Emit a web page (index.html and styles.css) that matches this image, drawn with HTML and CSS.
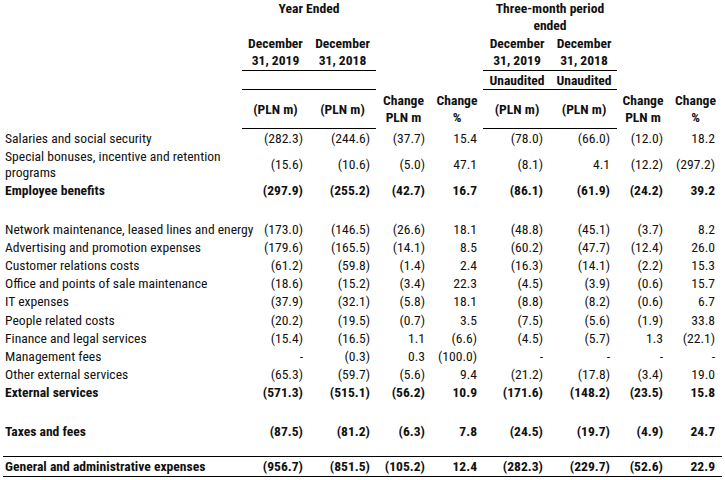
FILE: index.html
```html
<!DOCTYPE html>
<html lang="en">
<head>
<meta charset="utf-8">
<title>General and administrative expenses</title>
<link rel="stylesheet" href="styles.css">
</head>
<body>
<table class="fin">
  <colgroup>
    <col class="c-label">
    <col class="c-a"><col class="c-a">
    <col class="c-chg"><col class="c-pct">
    <col class="c-b"><col class="c-b2">
    <col class="c-chg2"><col class="c-pct2">
  </colgroup>
  <thead>
    <tr class="h-a">
      <th></th>
      <th colspan="2">Year Ended</th>
      <th></th><th></th>
      <th colspan="2">Three-month period<br>ended</th>
      <th></th><th></th>
    </tr>
    <tr class="h-b">
      <th></th>
      <th class="rule">December<br>31, 2019</th>
      <th class="rule">December<br>31, 2018</th>
      <th></th><th></th>
      <th class="rule">December<br>31, 2019</th>
      <th class="rule">December<br>31, 2018</th>
      <th></th><th></th>
    </tr>
    <tr class="h-c">
      <th></th>
      <th class="rule"></th>
      <th class="rule"></th>
      <th></th><th></th>
      <th class="rule">Unaudited</th>
      <th class="rule">Unaudited</th>
      <th></th><th></th>
    </tr>
    <tr class="h-d">
      <th></th>
      <th class="rule">(PLN m)</th>
      <th class="rule">(PLN m)</th>
      <th>Change<br>PLN m</th>
      <th>Change<br>%</th>
      <th class="rule">(PLN m)</th>
      <th class="rule">(PLN m)</th>
      <th>Change<br>PLN m</th>
      <th>Change<br>%</th>
    </tr>
  </thead>
  <tbody>
    <tr><td class="label">Salaries and social security</td><td>(282.3)</td><td>(244.6)</td><td>(37.7)</td><td>15.4</td><td>(78.0)</td><td>(66.0)</td><td>(12.0)</td><td>18.2</td></tr>
    <tr><td class="label">Special bonuses, incentive and retention programs</td><td>(15.6)</td><td>(10.6)</td><td>(5.0)</td><td>47.1</td><td>(8.1)</td><td>4.1</td><td>(12.2)</td><td>(297.2)</td></tr>
    <tr class="total"><td class="label">Employee benefits</td><td>(297.9)</td><td>(255.2)</td><td>(42.7)</td><td>16.7</td><td>(86.1)</td><td>(61.9)</td><td>(24.2)</td><td>39.2</td></tr>
    <tr class="spacer"><td class="label"></td><td></td><td></td><td></td><td></td><td></td><td></td><td></td><td></td></tr>
    <tr><td class="label nowrap">Network maintenance, leased lines and energy</td><td>(173.0)</td><td>(146.5)</td><td>(26.6)</td><td>18.1</td><td>(48.8)</td><td>(45.1)</td><td>(3.7)</td><td>8.2</td></tr>
    <tr><td class="label">Advertising and promotion expenses</td><td>(179.6)</td><td>(165.5)</td><td>(14.1)</td><td>8.5</td><td>(60.2)</td><td>(47.7)</td><td>(12.4)</td><td>26.0</td></tr>
    <tr><td class="label">Customer relations costs</td><td>(61.2)</td><td>(59.8)</td><td>(1.4)</td><td>2.4</td><td>(16.3)</td><td>(14.1)</td><td>(2.2)</td><td>15.3</td></tr>
    <tr><td class="label">Office and points of sale maintenance</td><td>(18.6)</td><td>(15.2)</td><td>(3.4)</td><td>22.3</td><td>(4.5)</td><td>(3.9)</td><td>(0.6)</td><td>15.7</td></tr>
    <tr><td class="label">IT expenses</td><td>(37.9)</td><td>(32.1)</td><td>(5.8)</td><td>18.1</td><td>(8.8)</td><td>(8.2)</td><td>(0.6)</td><td>6.7</td></tr>
    <tr><td class="label">People related costs</td><td>(20.2)</td><td>(19.5)</td><td>(0.7)</td><td>3.5</td><td>(7.5)</td><td>(5.6)</td><td>(1.9)</td><td>33.8</td></tr>
    <tr><td class="label">Finance and legal services</td><td>(15.4)</td><td>(16.5)</td><td>1.1</td><td>(6.6)</td><td>(4.5)</td><td>(5.7)</td><td>1.3</td><td>(22.1)</td></tr>
    <tr><td class="label">Management fees</td><td>-</td><td>(0.3)</td><td>0.3</td><td>(100.0)</td><td>-</td><td>-</td><td>-</td><td>-</td></tr>
    <tr><td class="label">Other external services</td><td>(65.3)</td><td>(59.7)</td><td>(5.6)</td><td>9.4</td><td>(21.2)</td><td>(17.8)</td><td>(3.4)</td><td>19.0</td></tr>
    <tr class="total"><td class="label">External services</td><td>(571.3)</td><td>(515.1)</td><td>(56.2)</td><td>10.9</td><td>(171.6)</td><td>(148.2)</td><td>(23.5)</td><td>15.8</td></tr>
    <tr class="spacer"><td class="label"></td><td></td><td></td><td></td><td></td><td></td><td></td><td></td><td></td></tr>
    <tr class="total"><td class="label">Taxes and fees</td><td>(87.5)</td><td>(81.2)</td><td>(6.3)</td><td>7.8</td><td>(24.5)</td><td>(19.7)</td><td>(4.9)</td><td>24.7</td></tr>
    <tr class="spacer spacer-short"><td class="label"></td><td></td><td></td><td></td><td></td><td></td><td></td><td></td><td></td></tr>
    <tr class="total grand"><td class="label">General and administrative expenses</td><td>(956.7)</td><td>(851.5)</td><td>(105.2)</td><td>12.4</td><td>(282.3)</td><td>(229.7)</td><td>(52.6)</td><td>22.9</td></tr>
  </tbody>
</table>
</body>
</html>
```

FILE: styles.css
```css
html, body {
  margin: 0;
  padding: 0;
  background: #ffffff;
}

body {
  color: #111111;
  font-family: "Roboto Condensed", "Liberation Sans Narrow", Roboto, sans-serif;
}

.fin {
  border-collapse: collapse;
  table-layout: fixed;
  width: 719px;
  margin-left: 3px;
}

.c-label { width: 239px; }
.c-a { width: 67px; }
.c-chg { width: 55px; }
.c-pct { width: 52px; }
.c-b { width: 68px; }
.c-b2 { width: 66px; }
.c-chg2 { width: 52px; }
.c-pct2 { width: 53px; }

.fin th {
  font-weight: 700;
  font-size: 13.6px;
  line-height: 17px;
  text-align: center;
  vertical-align: middle;
  padding: 0;
  white-space: nowrap;
}

.fin th.rule {
  border-bottom: 1px solid #000;
}

.h-a th {
  height: 34px;
  vertical-align: top;
}

.h-b th {
  height: 36px;
}

.h-c th {
  height: 18px;
}

.h-d th {
  height: 38px;
}

.fin td {
  font-size: 13.6px;
  line-height: 16px;
  padding: 1.1px 6px 1.1px 0;
  text-align: right;
  vertical-align: middle;
  white-space: nowrap;
}

.fin td:nth-child(6) {
  padding-right: 8px;
}

.fin td:nth-child(7),
.fin td:nth-child(9) {
  padding-right: 7px;
}

.fin td.label {
  text-align: left;
  padding-left: 2px;
  padding-right: 0;
  white-space: normal;
}

.fin td.nowrap {
  white-space: nowrap;
  overflow: visible;
}

.spacer td {
  height: 20px;
  padding: 0;
}

.spacer-short td {
  height: 16px;
}

.total td {
  font-weight: 700;
}

.grand td {
  border-top: 1px solid #000;
  border-bottom: 1px solid #000;
  padding-top: 1.5px;
  padding-bottom: 1.5px;
}
```
